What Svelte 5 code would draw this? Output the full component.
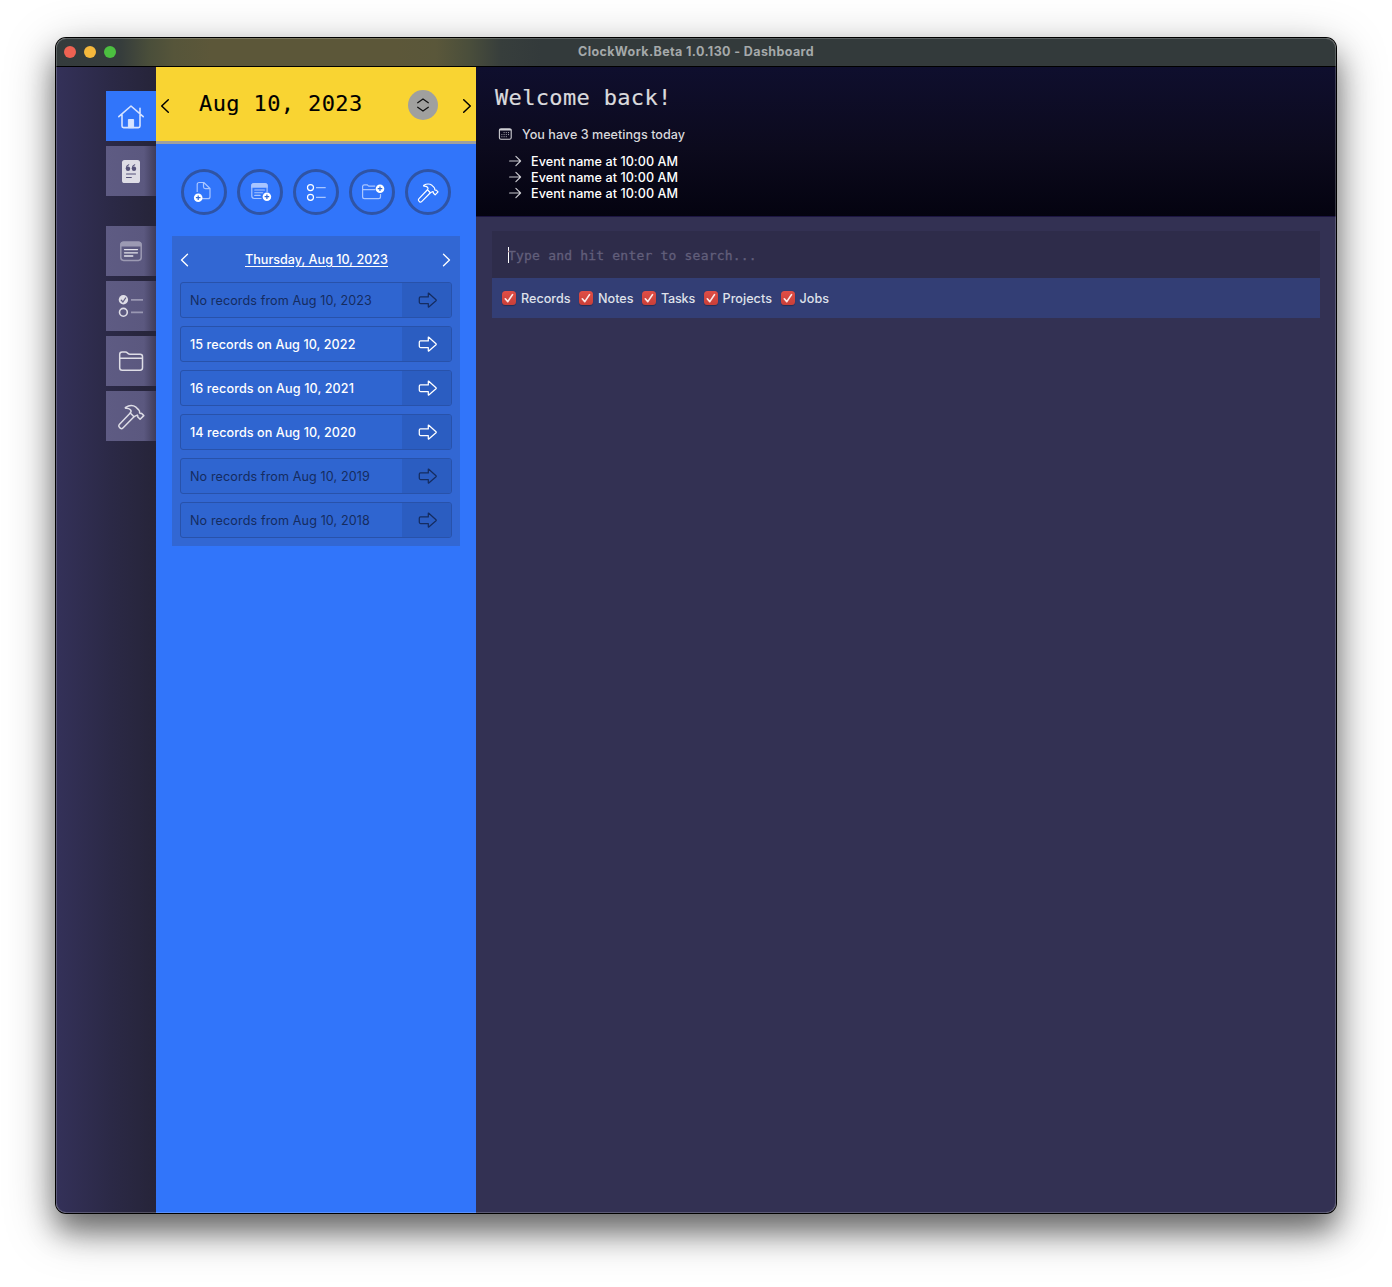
<script>
  const nav = ['home', 'quote', 'gap', 'note', 'tasks', 'folder', 'hammer'];
  const actions = ['docAdd', 'noteAdd', 'circles', 'folderAdd', 'hammer'];
  const records = [
    { label: 'No records from Aug 10, 2023', width: 182, empty: true },
    { label: '15 records on Aug 10, 2022', width: 165.5 },
    { label: '16 records on Aug 10, 2021', width: 164 },
    { label: '14 records on Aug 10, 2020', width: 166 },
    { label: 'No records from Aug 10, 2019', width: 180, empty: true },
    { label: 'No records from Aug 10, 2018', width: 180, empty: true }
  ];
  const filters = [
    { label: 'Records', width: 49.5 },
    { label: 'Notes', width: 35.5 },
    { label: 'Tasks', width: 34 },
    { label: 'Projects', width: 49.5 },
    { label: 'Jobs', width: 29.5 }
  ];

  // Spreads letters evenly so that a label takes up its intended width.
  function fit(node, width) {
    const apply = () => {
      node.style.letterSpacing = '0px';
      const natural = node.getBoundingClientRect().width;
      node.style.letterSpacing = (width - natural) / node.textContent.length + 'px';
    };
    apply();
    document.fonts?.ready.then(apply);
  }
</script>

{#snippet icon(name)}
  {#if name === 'home'}
    <svg width="50" height="50" viewBox="0 0 50 50" fill="none" stroke="#d6e3ff" stroke-width="1.6" stroke-linecap="round" stroke-linejoin="round">
      <path d="M12.8 25.7 25 15 37.2 25.700M16 24v11q0 1.600 1.600 1.600h14.800q1.600 0 1.600-1.600V24M34 22v-4.800" />
      <path d="M22.400 36.300v-7.800h5.200v7.800z" fill="#d6e3ff" stroke-width="1" />
    </svg>
  {:else if name === 'quote'}
    <svg width="50" height="50" viewBox="0 0 50 50">
      <rect x="16" y="14" width="18" height="23" rx="2.6" fill="#dedde6" />
      <g fill="#55527a">
        <circle cx="22" cy="22.800" r="2.200" /><circle cx="28" cy="22.800" r="2.200" />
      </g>
      <path d="M20.300 22.300q.1-2.700 2.400-3.500M26.300 22.300q.1-2.700 2.400-3.500M20.500 28h9M20.500 31.500h4.800" fill="none" stroke="#55527a" stroke-width="1.200" stroke-linecap="round" />
    </svg>
  {:else if name === 'note'}
    <svg width="50" height="50" viewBox="0 0 50 50" fill="none">
      <rect x="14.800" y="16.200" width="20.400" height="18.200" rx="2.800" stroke="#9c9ab3" stroke-width="1.500" />
      <path d="M14.500 20.500V18q0-2.500 2.800-2.500h15.400q2.800 0 2.800 2.500v2.500z" fill="#9c9ab3" />
      <path d="M18.500 23.600h13M18.500 26.800h13M18.500 30h8.300" stroke="#e4e3ec" stroke-width="1.300" stroke-linecap="round" />
    </svg>
  {:else if name === 'tasks'}
    <svg width="50" height="50" viewBox="0 0 50 50" fill="none">
      <circle cx="17.400" cy="18.800" r="4.700" fill="#dedde6" />
      <path d="m15.300 19.200 1.600 1.800 2.700-4" stroke="#625f83" stroke-width="1.300" stroke-linecap="round" />
      <circle cx="17.400" cy="31.300" r="3.900" stroke="#dedde6" stroke-width="1.600" />
      <path d="M25 18.800h12M25 31.300h12" stroke="#9997b2" stroke-width="1.700" />
    </svg>
  {:else if name === 'folder'}
    <svg width="50" height="50" viewBox="0 0 50 50" fill="none" stroke="#dedde6" stroke-width="1.500" stroke-linejoin="round">
      <path d="M13.700 31.700V18.400q0-2.300 2.400-2.300h3.300q1.200 0 2 .8l.8.7q.6.600 1.600.600h10.300q2.400 0 2.400 2.400v11.200q0 2.400-2.400 2.400H16.100q-2.400 0-2.400-2.500ZM13.700 22.300h22.800" />
    </svg>
  {:else if name === 'hammer'}
    <svg class="hammer" viewBox="11 12 28 28" fill="none" stroke="currentColor" stroke-width="1.500" stroke-linejoin="round" stroke-linecap="round">
      <path d="M24.300 21.900 13.300 33.400q-1.200 1.400 0 2.700l1 1q1.300 1.200 2.600-.1L28 25.700" />
      <path d="M19.600 16.300Q25.400 12.900 30 16.200l2.400 2.400q1.600 1.700 1.200 3.300 1 .900 1.900.400l2.300 2.300-3.700 3.700-2.300-2.300q.3-1.200-.5-1.900L28 25.700 24.300 21.900q1.500-1.700.1-3.200-1.700-1.700-4.600-1.500-.9-.4-.2-.9Z" />
    </svg>
  {:else if name === 'docAdd'}
    <svg width="40" height="40" viewBox="0 0 40 40" fill="none">
      <path d="M13.200 20v-7.500q0-2 2-2h4.600l6.200 6v8.200q0 2-2 2h-6.500M19.500 10.500v4.300q0 1.800 1.800 1.800H26" stroke="#a9c5ff" stroke-width="1.200" stroke-linejoin="round" />
      <circle cx="14.200" cy="25.700" r="4.300" fill="#fff" />
      <path d="M11.900 25.700h4.600M14.200 23.400V28" stroke="#2e68d8" stroke-width="1.200" />
    </svg>
  {:else if name === 'noteAdd'}
    <svg width="40" height="40" viewBox="0 0 40 40" fill="none">
      <path d="M21.500 26.500h-7.300q-2.400 0-2.400-2.400V14q0-2.300 2.400-2.300h10.500q2.400 0 2.400 2.300v6" stroke="#a9c5ff" stroke-width="1.200" />
      <path d="M11.200 15.700v-2q0-2.400 2.700-2.400h11q2.800 0 2.800 2.400v2z" fill="#a9c5ff" />
      <path d="M14.700 18h9.700M14.700 20.700h8M14.700 23.400h5.500" stroke="#a9c5ff" stroke-width="1.100" stroke-linecap="round" />
      <circle cx="26.900" cy="24.700" r="4.300" fill="#fff" />
      <path d="M24.600 24.700h4.600M26.900 22.400V27" stroke="#2e68d8" stroke-width="1.200" />
    </svg>
  {:else if name === 'circles'}
    <svg width="40" height="40" viewBox="0 0 40 40" fill="none">
      <circle cx="14.500" cy="15.600" r="3" stroke="#fff" stroke-width="1.200" />
      <circle cx="14.500" cy="25.300" r="3" stroke="#fff" stroke-width="1.200" />
      <path d="M20 15.600h9.700M20 25.300h9.700" stroke="#a9c5ff" stroke-width="1.200" />
    </svg>
  {:else if name === 'folderAdd'}
    <svg width="40" height="40" viewBox="0 0 40 40" fill="none">
      <path d="M28.500 22v2.700q0 1.900-2 1.900h-14q-1.900 0-1.900-1.900V14.600q0-1.800 1.900-1.800h2.600l1.600 1.300h6.500M10.600 17.700h13" stroke="#a9c5ff" stroke-width="1.200" stroke-linejoin="round" />
      <circle cx="28" cy="16.700" r="4.300" fill="#fff" />
      <path d="M25.700 16.700h4.600M28 14.400V19" stroke="#2e68d8" stroke-width="1.200" />
    </svg>
  {/if}
{/snippet}

{#snippet chevron(dir)}
  <svg class="chevron" width="10" height="16" viewBox="0 0 10 16" fill="none" stroke="currentColor" stroke-linecap="round" stroke-linejoin="round">
    {#if dir === 'left'}<path d="M8.300 1.700 1.700 8l6.600 6.300" />{:else}<path d="M1.700 1.700 8.300 8l-6.600 6.300" />{/if}
  </svg>
{/snippet}

<div class="window">
  <header class="titlebar">
    <div class="lights"><i class="red"></i><i class="amber"></i><i class="green"></i></div>
    <span class="title"><span use:fit={236}>ClockWork.Beta 1.0.130 - Dashboard</span></span>
  </header>

  <div class="body">
    <nav class="rail">
      {#each nav as item}
        {#if item === 'gap'}
          <div class="gap"></div>
        {:else}
          <button class="tab" class:active={item === 'home'} aria-label={item}>{@render icon(item)}</button>
        {/if}
      {/each}
    </nav>

    <aside class="side">
      <div class="datebar">
        {@render chevron('left')}
        <span class="date">Aug 10, 2023</span>
        <span class="stepper">
          <svg width="14" height="16" viewBox="0 0 14 16" fill="none" stroke="#111" stroke-width="1.300" stroke-linecap="round" stroke-linejoin="round"><path d="M1.700 5.700 7 2l5.300 3.700M1.700 10.300 7 14l5.300-3.700" /></svg>
        </span>
        {@render chevron('right')}
      </div>

      <div class="actions">
        {#each actions as item}
          <button class="round" aria-label={item}>{@render icon(item)}</button>
        {/each}
      </div>

      <section class="history">
        <div class="day">
          {@render chevron('left')}
          <span class="dayname" use:fit={143}>Thursday, Aug 10, 2023</span>
          {@render chevron('right')}
        </div>
        {#each records as r}
          <div class="record" class:empty={r.empty}>
            <div class="label"><span use:fit={r.width}>{r.label}</span></div>
            <div class="go">
              <svg width="20" height="16" viewBox="0 0 20 16" fill="none" stroke="currentColor" stroke-width="1.250" stroke-linejoin="round"><path d="M2.500 4.900h7.800V1.400q0-.5.500-.2l7.200 6.500q.5.500 0 1l-7.200 6.300q-.5.300-.5-.2v-3.300H2.500q-1.200 0-1.200-1.200V6.100q0-1.200 1.200-1.200Z" /></svg>
            </div>
          </div>
        {/each}
      </section>
    </aside>

    <main class="main">
      <section class="welcome">
        <h1>Welcome back!</h1>
        <div class="meetings">
          <svg width="14" height="12" viewBox="0 0 14 12" fill="none">
            <rect x="1.400" y=".7" width="11.800" height="10.600" rx="1.600" stroke="#cfcfd4" stroke-width="1.100" />
            <path d="M1.300 1.800h12" stroke="#cfcfd4" stroke-width="1.600" />
            <path d="M5.600 4.600h6M3.400 6.600h8M3.400 8.700h6" stroke="#aaaab2" stroke-width="1" stroke-dasharray="1 1.200" />
          </svg>
          <span class="text" use:fit={163}>You have 3 meetings today</span>
        </div>
        <ul>
          {#each [1, 2, 3] as n}
            <li>
              <svg width="13" height="12" viewBox="0 0 13 12" fill="none" stroke="#c9c9cf" stroke-width="1.150" stroke-linecap="round" stroke-linejoin="round"><path d="M.6 6h11M6.900 1.300 11.600 6l-4.700 4.700" /></svg>
              <span class="text" use:fit={147}>Event name at 10:00 AM</span>
            </li>
          {/each}
        </ul>
      </section>

      <section class="search">
        <div class="field"><i class="caret"></i><span>Type and hit enter to search...</span></div>
        <div class="filters">
          {#each filters as f}
            <div class="filter">
              <span class="check"><svg width="14" height="14" viewBox="0 0 14 14" fill="none" stroke="#fbe9e8" stroke-width="1.700" stroke-linecap="round" stroke-linejoin="round"><path d="m3.300 7.800 2.500 2.800 4.700-7" /></svg></span>
              <span class="text" use:fit={f.width}>{f.label}</span>
            </div>
          {/each}
        </div>
      </section>
    </main>
  </div>
</div>

<style>
  :global(body) {
    background: #fff;
  }
  :global(#app) {
    display: flow-root;
    height: 1287px;
    overflow: hidden;
  }
  .window {
    position: relative;
    box-sizing: border-box;
    width: 1280px;
    height: 1175px;
    margin: 38px 0 0 56px;
    display: flex;
    flex-direction: column;
    border-radius: 10px;
    overflow: hidden;
    font: 500 12.6px/17px Inter, 'Liberation Sans', sans-serif;
    white-space: nowrap;
    box-shadow: 0 0 0 1px #000, 0 18px 28px rgba(0, 0, 0, 0.42), 0 14px 50px rgba(0, 0, 0, 0.36);
  }
  .window::after {
    content: '';
    position: absolute;
    inset: 0;
    border-radius: 10px;
    box-shadow: inset 0 0 0 1px rgba(255, 255, 255, 0.2);
    pointer-events: none;
  }
  .titlebar {
    display: grid;
    grid-template-columns: 1fr auto 1fr;
    align-items: center;
    height: 28px;
    border-bottom: 1px solid #000;
    background: linear-gradient(90deg, #343b3c 0, #363d3c 65px, #4a4e3a 93px, #56553a 118px, #5c5739 155px, #5c5739 340px, #5a573a 380px, #4a4e3b 413px, #373e3c 445px, #333a3b 485px);
  }
  .lights {
    display: flex;
    gap: 8px;
    padding-left: 8px;
  }
  .lights i {
    width: 12px;
    height: 12px;
    border-radius: 50%;
  }
  .red { background: #ee6252; }
  .amber { background: #f5b83c; }
  .green { background: #4cbf40; }
  .title {
    padding-bottom: 1px;
    font-size: 12.5px;
    line-height: 16px;
    font-weight: 700;
    color: #a5a9aa;
  }
  button {
    border: 0;
    margin: 0;
    padding: 0;
  }
  svg {
    display: block;
    flex: none;
  }
  .text {
    padding-top: 1px;
  }
  .body {
    display: flex;
    flex: 1;
  }
  .rail {
    display: flex;
    flex-direction: column;
    align-items: flex-end;
    gap: 5px;
    box-sizing: border-box;
    width: 100px;
    padding-top: 24px;
    background: linear-gradient(90deg, #343159, #2b2946 55%, #262439);
  }
  .gap {
    height: 20px;
  }
  .tab {
    width: 50px;
    height: 50px;
    color: #dedde6;
    background: linear-gradient(90deg, #5e5b83 0, #5b587f 76%, #3f3c5b 100%);
    display: grid;
    place-items: center;
  }
  .tab.active {
    background: #3175fa;
  }
  .hammer {
    width: 28px;
    height: 28px;
  }
  .tab .hammer {
    margin-top: 2px;
  }
  .side {
    width: 320px;
    background: #3175fa;
  }
  .datebar {
    display: flex;
    align-items: center;
    height: 74px;
    padding: 0 4px;
    background: #f9d432;
    border-bottom: 3px solid #a0a09e;
    color: #000;
  }
  .chevron {
    stroke-width: 1.500;
  }
  .datebar .chevron {
    margin-top: 4px;
  }
  .date {
    width: 209px;
    margin: -1px 0 0 29px;
    font: 22px/28px 'DejaVu Sans Mono', monospace;
    letter-spacing: 0.38px;
    -webkit-text-stroke: 0.12px currentColor;
  }
  .stepper {
    display: grid;
    place-items: center;
    width: 30px;
    height: 30px;
    margin: 2px 24px 0 0;
    border-radius: 50%;
    background: #a0a09e;
  }
  .actions {
    display: flex;
    justify-content: center;
    gap: 10px;
    padding: 25px 0 21px;
  }
  .round {
    display: grid;
    place-items: center;
    box-sizing: border-box;
    width: 46px;
    height: 46px;
    border: 3px solid #2f54a5;
    border-radius: 50%;
    background: none;
    color: #fff;
  }
  .round .hammer {
    width: 22px;
    height: 22px;
    margin-top: 1px;
  }
  .history {
    display: flex;
    flex-direction: column;
    gap: 8px;
    margin: 0 16px;
    padding: 0 8px 8px;
    background: #3267d3;
  }
  .day {
    display: flex;
    align-items: center;
    justify-content: space-between;
    height: 46px;
    margin-bottom: -8px;
    padding-right: 1px;
    color: #fff;
  }
  .day .chevron {
    width: 9px;
    margin-top: 1px;
  }
  .dayname {
    padding-top: 1px;
    text-decoration: underline;
    text-underline-offset: 2px;
    margin-left: 2px;
  }
  .record {
    display: flex;
    box-sizing: border-box;
    height: 36px;
    border: 1px solid #2852aa;
    border-radius: 3px;
    overflow: hidden;
    background: #2f65d0;
    color: #fff;
  }
  .record.empty {
    color: #152c60;
    font-weight: 400;
  }
  .label {
    flex: 1;
    padding: 9px 9px 8px;
  }
  .go {
    display: grid;
    place-items: center;
    width: 49px;
    padding-left: 3px;
    box-sizing: border-box;
    background: #2b5dc1;
  }
  .main {
    flex: 1;
    background: #333153;
  }
  .welcome {
    box-sizing: border-box;
    height: 150px;
    padding: 17px 18px 0;
    border-bottom: 1px solid #1c1542;
    background: linear-gradient(#0f0f2e, #0c0a1d 55%, #040310);
  }
  h1 {
    margin: 0 0 0 1px;
    font: 22px/28px 'DejaVu Sans Mono', monospace;
    letter-spacing: 0.34px;
    color: #dadadd;
    -webkit-text-stroke: 0.2px currentColor;
  }
  .meetings {
    display: flex;
    align-items: center;
    gap: 10px;
    padding: 13px 0 0 4px;
    color: #d9d9dc;
  }
  ul {
    margin: 10px 0 0 14.500px;
    padding: 0;
    list-style: none;
    color: #fff;
  }
  li {
    display: flex;
    align-items: center;
    gap: 9.500px;
    height: 16px;
  }
  .search {
    margin: 14px 16px 0;
  }
  .field {
    display: flex;
    align-items: center;
    height: 47px;
    padding-left: 16px;
    background: #2e2c4a;
    font: 13px/16px 'DejaVu Sans Mono', monospace;
    letter-spacing: 0.2px;
    color: #625f7b;
    -webkit-text-stroke: 0.3px currentColor;
  }
  .field span {
    padding-top: 2px;
  }
  .caret {
    width: 1px;
    height: 16px;
    margin-right: -1px;
    background: #fff;
  }
  .filters {
    display: flex;
    align-items: center;
    gap: 8.500px;
    height: 40px;
    padding-left: 10px;
    background: #333e75;
    color: #dfe1ea;
  }
  .filter {
    display: flex;
    align-items: center;
    gap: 5px;
  }
  .check {
    border-radius: 3.500px;
    background: linear-gradient(#e04e46, #c93f38);
    box-shadow: 0 0.500px 1px rgba(0, 0, 0, 0.3);
  }
</style>
